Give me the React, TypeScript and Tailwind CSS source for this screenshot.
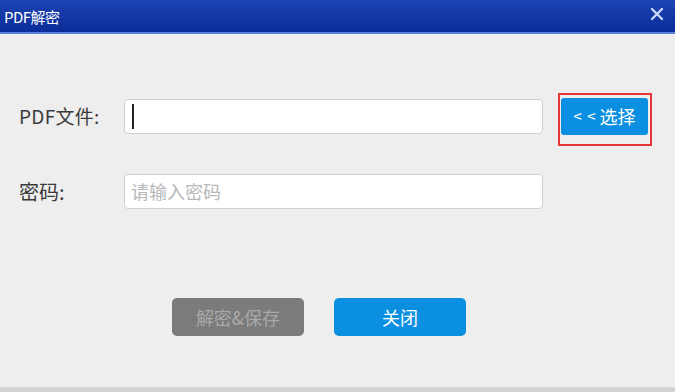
import React from "react";

export default function App() {
  const font = { fontFamily: '"Microsoft YaHei", "Noto Sans CJK SC", "Noto Sans", sans-serif' };
  return (
    <div className="w-[675px] h-[392px] bg-[#eeeeee] flex flex-col overflow-hidden" style={font}>
      {/* Title bar */}
      <div className="h-[34px] shrink-0 flex flex-col">
        <div className="h-[32px] bg-gradient-to-b from-[#1d45b4] to-[#0a2c98] flex items-center justify-between pl-[4px] pr-[11px]">
          <span className="text-white text-[15px] leading-none tracking-[-0.5px]">PDF解密</span>
          <svg width="14" height="14" viewBox="0 0 14 14" className="mt-[-5px]">
            <path d="M2 2 L12 12 M12 2 L2 12" stroke="#c9d7fb" strokeWidth="2.4" strokeLinecap="round" />
          </svg>
        </div>
        <div className="h-[2px] bg-[#5a7fd8]" />
      </div>

      {/* Content */}
      <div className="flex-1 flex flex-col pt-[59px]">
        {/* Row 1 */}
        <div className="flex items-start pl-[19px]">
          <div className="w-[105px] h-[35px] mt-[6px] flex items-center text-[19px] text-[#3a3a3a] tracking-[0.3px]">PDF文件:</div>
          <div className="w-[419px] h-[35px] mt-[6px] bg-white border border-[#cfcfcf] rounded-[4px] flex items-center pl-[7px]">
            <div className="w-[2px] h-[25px] bg-[#222222]" />
          </div>
          <div className="ml-[15px] w-[94px] h-[53px] border-2 border-[#e53935] pt-[3px] pl-[1px] pr-[2px] pb-[9px]">
            <div className="w-[87px] h-[37px] bg-[#0b8fe0] rounded-[3px] flex items-center justify-center text-white text-[18px]">
              <span className="text-[15px] mr-[3px] tracking-[1px]">&lt; &lt;</span>选择
            </div>
          </div>
        </div>

        {/* Row 2 */}
        <div className="flex items-center pl-[19px] mt-[28px]">
          <div className="w-[105px] h-[35px] flex items-center text-[20px] text-[#3a3a3a]">密码:</div>
          <div className="w-[419px] h-[35px] bg-white border border-[#cfcfcf] rounded-[4px] flex items-center pl-[6px] text-[18px] text-[#b8b8b8]">
            请输入密码
          </div>
        </div>

        {/* Buttons */}
        <div className="flex pl-[172px] gap-[30px] mt-[89px]">
          <div className="w-[132px] h-[38px] rounded-[5px] bg-[#7b7b7b] flex items-center justify-center text-[18px] text-[#a9a9a9]">
            解密&amp;保存
          </div>
          <div className="w-[132px] h-[38px] rounded-[5px] bg-[#0b8fe0] flex items-center justify-center text-[18px] text-white">
            关闭
          </div>
        </div>
      </div>

      {/* Bottom edge */}
      <div className="h-[5px] shrink-0 bg-[#d2d2d2] border-t border-[#dcdcdc]" />
    </div>
  );
}
